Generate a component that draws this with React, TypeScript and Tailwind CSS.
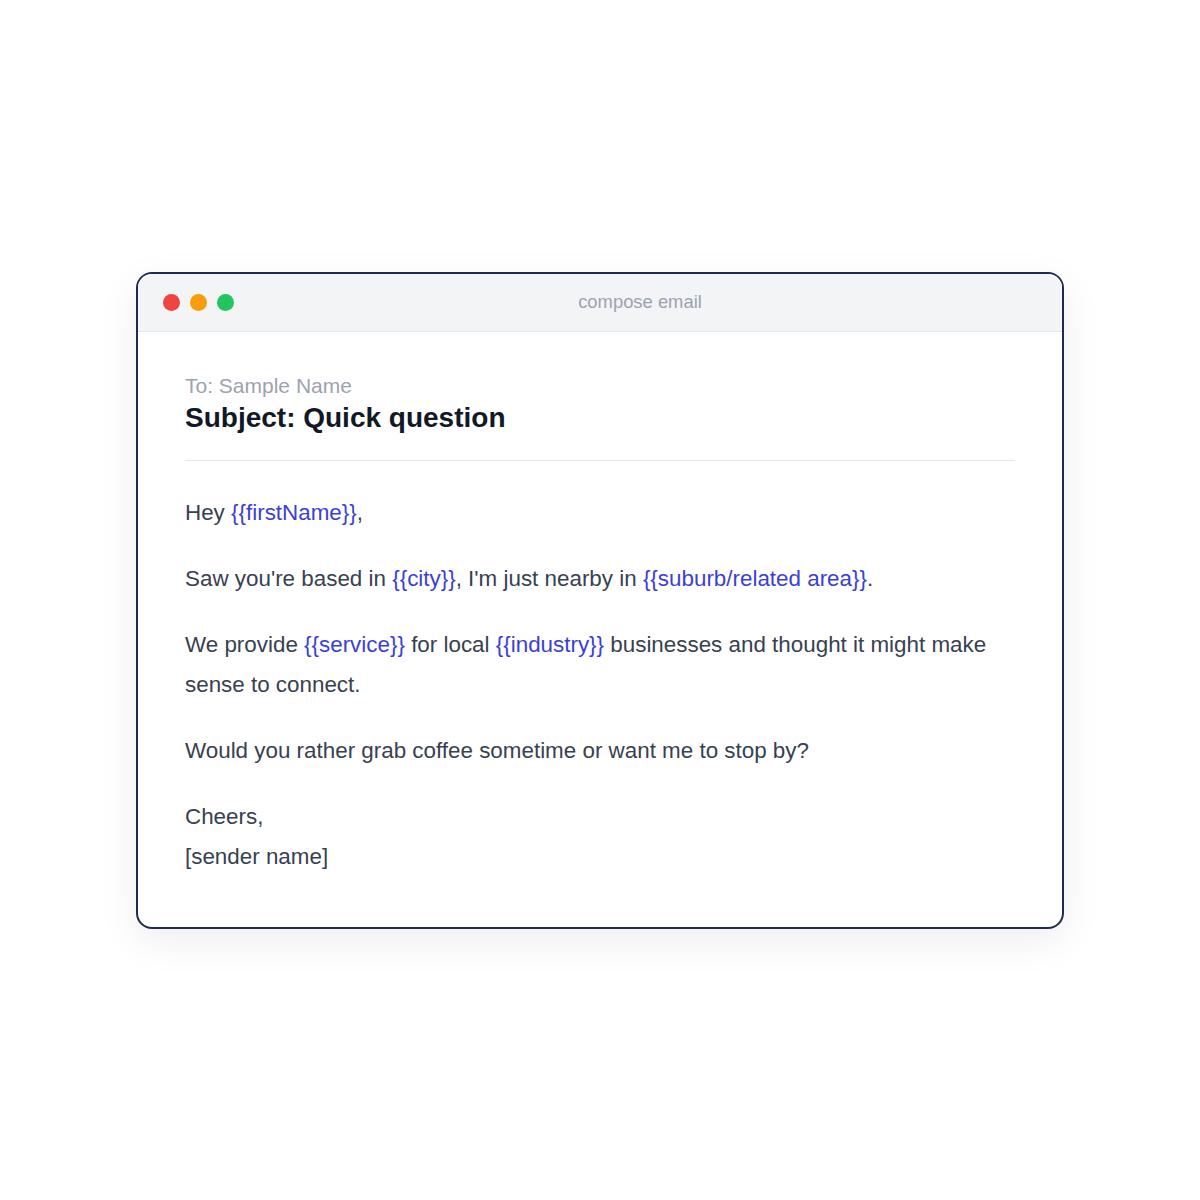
import React from 'react'

// 邮件模板预览卡片
const Var = ({ children }: { children: React.ReactNode }) => (
  <span className="text-[#3b3fd8]">{children}</span>
)

export default function App() {
  return (
    <div
      className="min-h-screen w-full bg-white flex items-center justify-center"
      style={{ fontFamily: '"Liberation Sans", Arial, sans-serif' }}
    >
      <div className="w-[928px] rounded-2xl border-2 border-[#1f2a4d] bg-white overflow-hidden shadow-[0_12px_40px_rgba(0,0,0,0.07)]">
        {/* 窗口标题栏 */}
        <div className="h-[58px] flex items-center pl-[25px] pr-6 bg-[#f3f4f6] border-b border-[#e5e7eb]">
          <div className="flex items-center gap-[10px]">
            <span className="w-[17px] h-[17px] rounded-full bg-[#ef4444]" />
            <span className="w-[17px] h-[17px] rounded-full bg-[#f59e0b]" />
            <span className="w-[17px] h-[17px] rounded-full bg-[#22c55e]" />
          </div>
          <div className="flex-1 pl-2 text-center text-[18.4px] text-[#9ca3af]">compose email</div>
        </div>

        {/* 邮件内容 */}
        <div className="px-[47px] pt-10 pb-[50px]">
          <div className="pb-6 border-b border-[#e5e7eb]">
            <div className="text-[21px] leading-[28px] text-[#9ca3af]">To: Sample Name</div>
            <div className="text-[28px] leading-[36px] font-bold text-[#111827]">Subject: Quick question</div>
          </div>

          <div className="mt-8 text-[22.4px] leading-[40px] text-[#374151] flex flex-col gap-[26px]">
            <p>
              Hey <Var>{'{{firstName}}'}</Var>,
            </p>
            <p>
              Saw you're based in <Var>{'{{city}}'}</Var>, I'm just nearby in{' '}
              <Var>{'{{suburb/related area}}'}</Var>.
            </p>
            <p>
              We provide <Var>{'{{service}}'}</Var> for local <Var>{'{{industry}}'}</Var> businesses and
              thought it might make sense to connect.
            </p>
            <p>Would you rather grab coffee sometime or want me to stop by?</p>
            <p>
              Cheers,
              <br />
              [sender name]
            </p>
          </div>
        </div>
      </div>
    </div>
  )
}
